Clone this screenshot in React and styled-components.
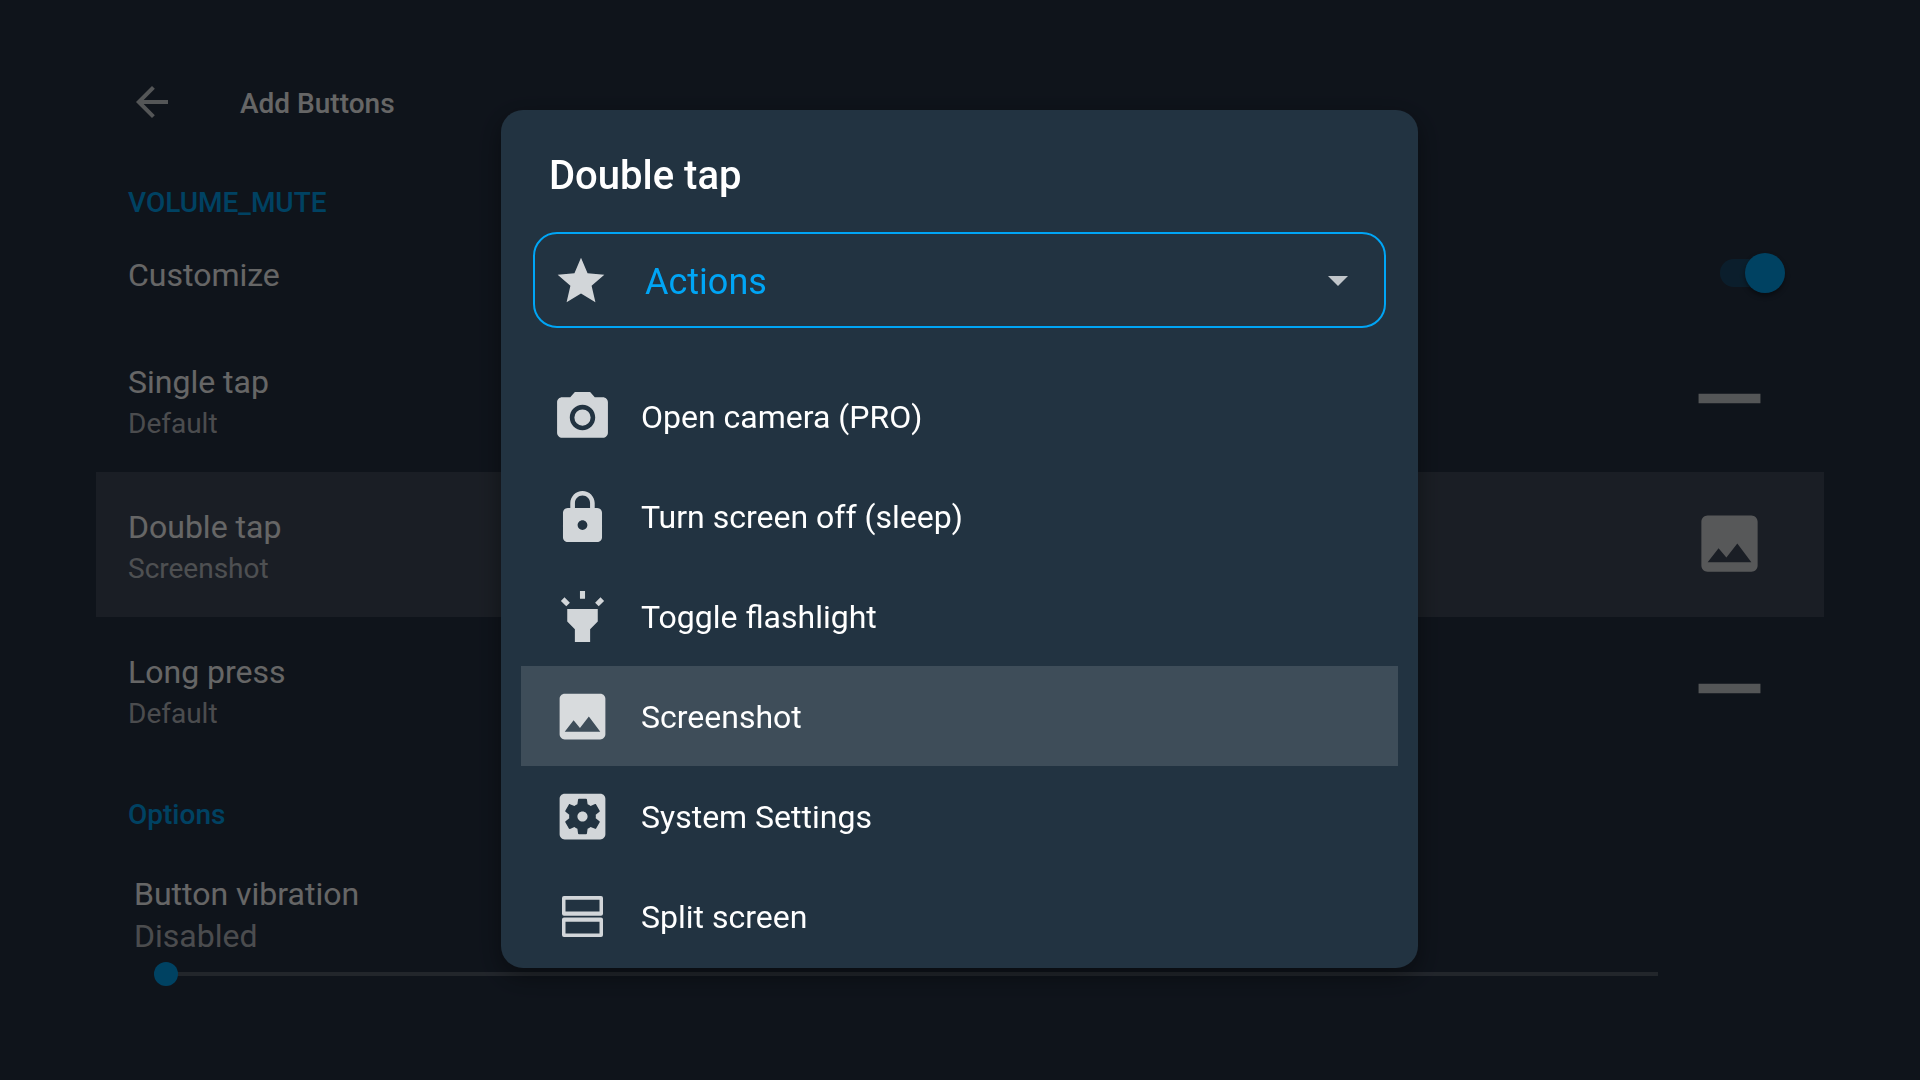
import React, { useState } from "react";
import styled, { createGlobalStyle, css } from "styled-components";

const accent = "#00a5f5";

const GlobalStyle = createGlobalStyle`
  *, *::before, *::after { box-sizing: border-box; }
  body {
    margin: 0;
    background: #263244;
    color: #fff;
    font-family: Roboto, "Noto Sans", sans-serif;
  }
  button, input, select { font: inherit; color: inherit; }
`;

const Page = styled.main`
  min-height: 100vh;
  padding: 70px 5% 0;
`;

const Header = styled.header`
  display: flex;
  align-items: center;
  gap: 64px;
  height: 64px;
  margin-bottom: 16px;
  padding-left: 32px;
`;

const BackButton = styled.button`
  display: flex;
  padding: 0;
  border: 0;
  background: none;
`;

const PageTitle = styled.h1`
  margin: 0;
  padding-top: 4px;
  font-size: 28px;
  font-weight: 500;
  line-height: 36px;
`;

const SectionTitle = styled.h2`
  margin: 0;
  padding: 36px 32px 0;
  font-size: 28px;
  font-weight: 500;
  line-height: 34px;
  color: ${accent};
`;

const rowBase = css`
  display: flex;
  align-items: center;
  justify-content: space-between;
  width: 100%;
  border: 0;
  text-align: left;
`;

const SwitchRow = styled.label`
  ${rowBase}
  height: 107px;
  padding: 0 39px 2px 32px;
`;

const PreferenceRow = styled.button`
  ${rowBase}
  height: 145px;
  padding: 0 57px 2px 32px;
  background: ${(p) => (p.$selected ? "rgba(255, 255, 255, 0.13)" : "transparent")};
`;

const Labels = styled.span`
  display: flex;
  flex-direction: column;
  gap: 6px;
  padding-top: ${(p) => (p.$single ? "4px" : "8px")};
`;

const Label = styled.span`
  font-size: 32px;
  line-height: 36px;
`;

const Summary = styled.span`
  font-size: ${(p) => (p.$large ? "32px" : "28px")};
  line-height: 36px;
  color: rgba(255, 255, 255, 0.7);
`;

const Switch = styled.input`
  appearance: none;
  display: flex;
  align-items: center;
  justify-content: flex-end;
  width: 65px;
  height: 40px;
  margin: 0;

  &::before {
    content: "";
    width: 57px;
    height: 28px;
    margin-right: -32px;
    border-radius: 14px;
    background: rgba(0, 165, 245, 0.24);
  }
  &::after {
    content: "";
    width: 40px;
    height: 40px;
    flex: none;
    border-radius: 50%;
    background: ${accent};
    box-shadow: 0 3px 5px rgba(0, 0, 0, 0.4);
  }
  &:not(:checked) { justify-content: flex-start; filter: grayscale(1); }
`;

const SliderBlock = styled.div`
  display: flex;
  flex-direction: column;
  gap: 4px;
  padding: 42px 154px 0 38px;
`;

const SliderLabel = styled.label`
  display: flex;
  flex-direction: column;
  gap: 2px;
  > span { line-height: 40px; }
`;

const Slider = styled.input`
  appearance: none;
  height: 28px;
  margin: 0 0 0 20px;
  background: none;

  &::-webkit-slider-runnable-track {
    height: 4px;
    background: linear-gradient(rgba(255, 255, 255, 0.22), rgba(255, 255, 255, 0.22)) no-repeat 12px 0 /
      calc(100% - 24px) 4px;
  }
  &::-webkit-slider-thumb {
    appearance: none;
    width: 24px;
    height: 24px;
    margin-top: -10px;
    border-radius: 50%;
    background: ${accent};
  }
`;

const Scrim = styled.div`
  position: fixed;
  inset: 0;
  display: flex;
  align-items: center;
  justify-content: center;
  padding: 0 1px 2px 0;
  background: rgba(0, 0, 0, 0.6);
`;

const Dialog = styled.section`
  width: 917px;
  max-width: 90%;
  padding: 40px 0 2px;
  border-radius: 22px;
  background: #223341;
  box-shadow: 0 8px 24px rgba(0, 0, 0, 0.4);
`;

const DialogTitle = styled.h2`
  margin: 0 48px 30px;
  font-size: 40px;
  font-weight: 500;
  line-height: 52px;
`;

const SelectFrame = styled.div`
  display: grid;
  grid-template-columns: 56px 1fr 48px;
  align-items: center;
  height: 96px;
  margin: 0 32px 38px;
  padding: 0 22px 0 18px;
  border: 2px solid ${accent};
  border-radius: 24px;

  > svg { grid-row: 1; pointer-events: none; }
  > svg:first-child { grid-column: 1; }
  > svg:last-child { grid-column: 3; opacity: 0.72; }
`;

const CategorySelect = styled.select`
  appearance: none;
  grid-row: 1;
  grid-column: 1 / -1;
  height: 92px;
  padding: 4px 0 0 92px;
  border: 0;
  outline: 0;
  background: transparent;
  color: ${accent};
  font-size: 36px;
`;

const ActionList = styled.ul`
  margin: 0;
  padding: 0 20px;
  list-style: none;
`;

const ActionButton = styled.button`
  display: flex;
  align-items: center;
  gap: 28px;
  width: 100%;
  height: 100px;
  padding: 0 31px;
  border: 0;
  background: ${(p) => (p.$selected ? "rgba(255, 255, 255, 0.13)" : "transparent")};
  font-size: 32px;
  text-align: left;
`;

const ActionLabel = styled.span`
  padding-top: 2px;
`;

const Icon = styled.svg`
  flex: none;
  width: ${(p) => p.$size}px;
  height: ${(p) => p.$size}px;
  fill: #fff;
  opacity: 0.8;
`;

const icons = {
  back: { d: "M20 11H7.83l5.59-5.59L12 4l-8 8 8 8 1.41-1.41L7.83 13H20v-2z" },
  star: {
    viewBox: "0 -0.5 24 24",
    d: "M12 17.27L18.18 21l-1.64-7.03L22 9.24l-7.19-.61L12 2 9.19 8.63 2 9.24l5.46 4.73L5.82 21z",
  },
  dropDown: { d: "M7 10l5 5 5-5z" },
  dash: { d: "M2.1 10.5h19.8v3H2.1z" },
  camera: {
    viewBox: "0 -0.4 24 24",
    d: "M12 8.8a3.2 3.2 0 1 0 0 6.4a3.2 3.2 0 1 0 0-6.4zM9 2L7.17 4H4c-1.1 0-2 .9-2 2v12c0 1.1.9 2 2 2h16c1.1 0 2-.9 2-2V6c0-1.1-.9-2-2-2h-3.17L15 2H9zm3 15c-2.76 0-5-2.24-5-5s2.24-5 5-5 5 2.24 5 5-2.24 5-5 5z",
  },
  lock: {
    viewBox: "-0.5 -1 25 25",
    d: "M18 8h-1V6c0-2.76-2.24-5-5-5S7 3.24 7 6v2H6c-1.1 0-2 .9-2 2v10c0 1.1.9 2 2 2h12c1.1 0 2-.9 2-2V10c0-1.1-.9-2-2-2zm-6 9c-1.1 0-2-.9-2-2s.9-2 2-2 2 .9 2 2-.9 2-2 2zm3.1-9H8.9V6c0-1.71 1.39-3.1 3.1-3.1 1.71 0 3.1 1.39 3.1 3.1v2z",
  },
  flashlight: {
    d: "M6 14l3 3v5h6v-5l3-3V9H6v5zM11 2h2v3h-2zM3.5 5.88l1.41-1.42 2.13 2.13L5.62 8zM16.96 6.59l2.12-2.13 1.42 1.42L18.38 8z",
  },
  image: {
    d: "M21 19V5c0-1.1-.9-2-2-2H5c-1.1 0-2 .9-2 2v14c0 1.1.9 2 2 2h14c1.1 0 2-.9 2-2zM8.5 13.5l2.5 3.01L14.5 12l4.5 6H5l3.5-4.5z",
  },
  settings: {
    d: "M12 10c-1.1 0-2 .9-2 2s.9 2 2 2 2-.9 2-2-.9-2-2-2zm7-7H5c-1.11 0-2 .9-2 2v14c0 1.1.89 2 2 2h14c1.11 0 2-.9 2-2V5c0-1.1-.89-2-2-2zm-1.75 9c0 .23-.02.46-.05.68l1.48 1.16c.13.11.17.3.08.45l-1.4 2.42c-.09.15-.27.21-.43.15l-1.74-.7c-.36.28-.76.51-1.18.69l-.26 1.85c-.03.17-.18.3-.35.3h-2.8c-.17 0-.32-.13-.35-.29l-.26-1.85c-.43-.18-.82-.41-1.18-.69l-1.74.7c-.16.06-.34 0-.43-.15l-1.4-2.42c-.09-.15-.05-.34.08-.45l1.48-1.16c-.03-.23-.05-.46-.05-.69 0-.23.02-.46.05-.68l-1.48-1.16c-.13-.11-.17-.3-.08-.45l1.4-2.42c.09-.15.27-.21.43-.15l1.74.7c.36-.28.76-.51 1.18-.69l.26-1.85c.03-.17.18-.3.35-.3h2.8c.17 0 .32.13.35.29l.26 1.85c.43.18.82.41 1.18.69l1.74-.7c.16-.06.34 0 .43.15l1.4 2.42c.09.15.05.34-.08.45l-1.48 1.16c.03.23.05.46.05.69z",
  },
  split: {
    viewBox: "0 0 61 61",
    d: "M12 10H49a2 2 0 0 1 2 2V27.700a2 2 0 0 1-2 2H12a2 2 0 0 1-2-2V12a2 2 0 0 1 2-2zM13.500 13.700V25.500H47.500V13.700zM12 31.500H49a2 2 0 0 1 2 2V49a2 2 0 0 1-2 2H12a2 2 0 0 1-2-2V33.500a2 2 0 0 1 2-2zM13.500 35.700V47.500H47.500V35.700z",
  },
};

function Glyph({ name, size }) {
  const { d, viewBox = "0 0 24 24" } = icons[name];
  return (
    <Icon $size={size} viewBox={viewBox} aria-hidden="true">
      <path d={d} fillRule="evenodd" />
    </Icon>
  );
}

const preferences = [
  { title: "Single tap", summary: "Default", icon: "dash" },
  { title: "Double tap", summary: "Screenshot", icon: "image" },
  { title: "Long press", summary: "Default", icon: "dash" },
];

const actions = [
  { label: "Open camera (PRO)", icon: "camera" },
  { label: "Turn screen off (sleep)", icon: "lock" },
  { label: "Toggle flashlight", icon: "flashlight" },
  { label: "Screenshot", icon: "image" },
  { label: "System Settings", icon: "settings" },
  { label: "Split screen", icon: "split" },
];

export default function App() {
  const [customize, setCustomize] = useState(true);
  const [vibration, setVibration] = useState(0);
  const [action, setAction] = useState("Screenshot");

  return (
    <>
      <GlobalStyle />
      <Page>
        <Header>
          <BackButton type="button" aria-label="Back">
            <Glyph name="back" size={48} />
          </BackButton>
          <PageTitle>Add Buttons</PageTitle>
        </Header>

        <SectionTitle>VOLUME_MUTE</SectionTitle>
        <SwitchRow>
          <Labels $single>
            <Label>Customize</Label>
          </Labels>
          <Switch
            type="checkbox"
            role="switch"
            checked={customize}
            onChange={(e) => setCustomize(e.target.checked)}
          />
        </SwitchRow>
        {preferences.map((item) => (
          <PreferenceRow key={item.title} type="button" $selected={item.title === "Double tap"}>
            <Labels>
              <Label>{item.title}</Label>
              <Summary>{item.summary}</Summary>
            </Labels>
            <Glyph name={item.icon} size={75} />
          </PreferenceRow>
        ))}

        <SectionTitle>Options</SectionTitle>
        <SliderBlock>
          <SliderLabel htmlFor="vibration">
            <Label>Button vibration</Label>
            <Summary $large>{vibration === 0 ? "Disabled" : `${vibration} ms`}</Summary>
          </SliderLabel>
          <Slider
            id="vibration"
            type="range"
            min="0"
            max="100"
            value={vibration}
            onChange={(e) => setVibration(Number(e.target.value))}
          />
        </SliderBlock>
      </Page>

      <Scrim>
        <Dialog role="dialog" aria-modal="true" aria-labelledby="dialog-title">
          <DialogTitle id="dialog-title">Double tap</DialogTitle>
          <SelectFrame>
            <Glyph name="star" size={56} />
            <CategorySelect aria-label="Category" defaultValue="Actions">
              <option>Actions</option>
            </CategorySelect>
            <Glyph name="dropDown" size={48} />
          </SelectFrame>
          <ActionList>
            {actions.map((item) => (
              <li key={item.label}>
                <ActionButton
                  type="button"
                  $selected={item.label === action}
                  onClick={() => setAction(item.label)}
                >
                  <Glyph name={item.icon} size={61} />
                  <ActionLabel>{item.label}</ActionLabel>
                </ActionButton>
              </li>
            ))}
          </ActionList>
        </Dialog>
      </Scrim>
    </>
  );
}
